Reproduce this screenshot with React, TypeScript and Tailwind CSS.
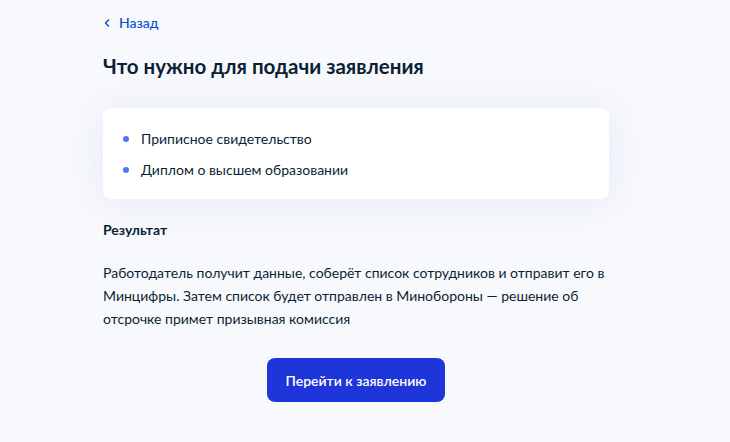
import { ChevronLeft } from "lucide-react";

const docs = ["Приписное свидетельство", "Диплом о высшем образовании"];

export default function App() {
  return (
    <div
      className="min-h-screen w-full bg-[#f8f9fd] text-[#0b1f33]"
      style={{ fontFamily: "Lato, 'Noto Sans', sans-serif" }}
    >
      <div className="w-[506px] ml-[103px] pt-[14px]">
        <a href="#" className="flex items-center gap-[6px] text-[14px] leading-[18px] text-[#0d4cd3] font-medium">
          <ChevronLeft className="w-[12px] h-[12px] -ml-[2px]" strokeWidth={3} />
          <span>Назад</span>
        </a>

        <h1 className="mt-[21px] text-[20.5px] leading-[26px] font-bold">
          Что нужно для подачи заявления
        </h1>

        <div className="mt-[29px] bg-white rounded-[8px] shadow-[0_2px_40px_rgba(176,190,230,0.25)] px-[20px] pt-[21px] pb-[19px]">
          <ul className="flex flex-col gap-[11px]">
            {docs.map((d) => (
              <li key={d} className="flex items-center text-[14px] leading-[20px]">
                <span className="w-[6px] h-[6px] rounded-full bg-[#4e76ec] mr-[12px]" />
                {d}
              </li>
            ))}
          </ul>
        </div>

        <h2 className="mt-[21px] text-[14px] leading-[20px] font-bold">Результат</h2>

        <p className="mt-[21px] text-[14px] leading-[23px]">
          Работодатель получит данные, соберёт список сотрудников и отправит его в Минцифры. Затем
          список будет отправлен в Минобороны — решение об отсрочке примет призывная комиссия
        </p>

        <div className="flex justify-center mt-[28px]">
          <button className="w-[178px] h-[44px] rounded-[8px] bg-[#1d35d9] text-white text-[14px] font-semibold">
            Перейти к заявлению
          </button>
        </div>
      </div>
    </div>
  );
}
